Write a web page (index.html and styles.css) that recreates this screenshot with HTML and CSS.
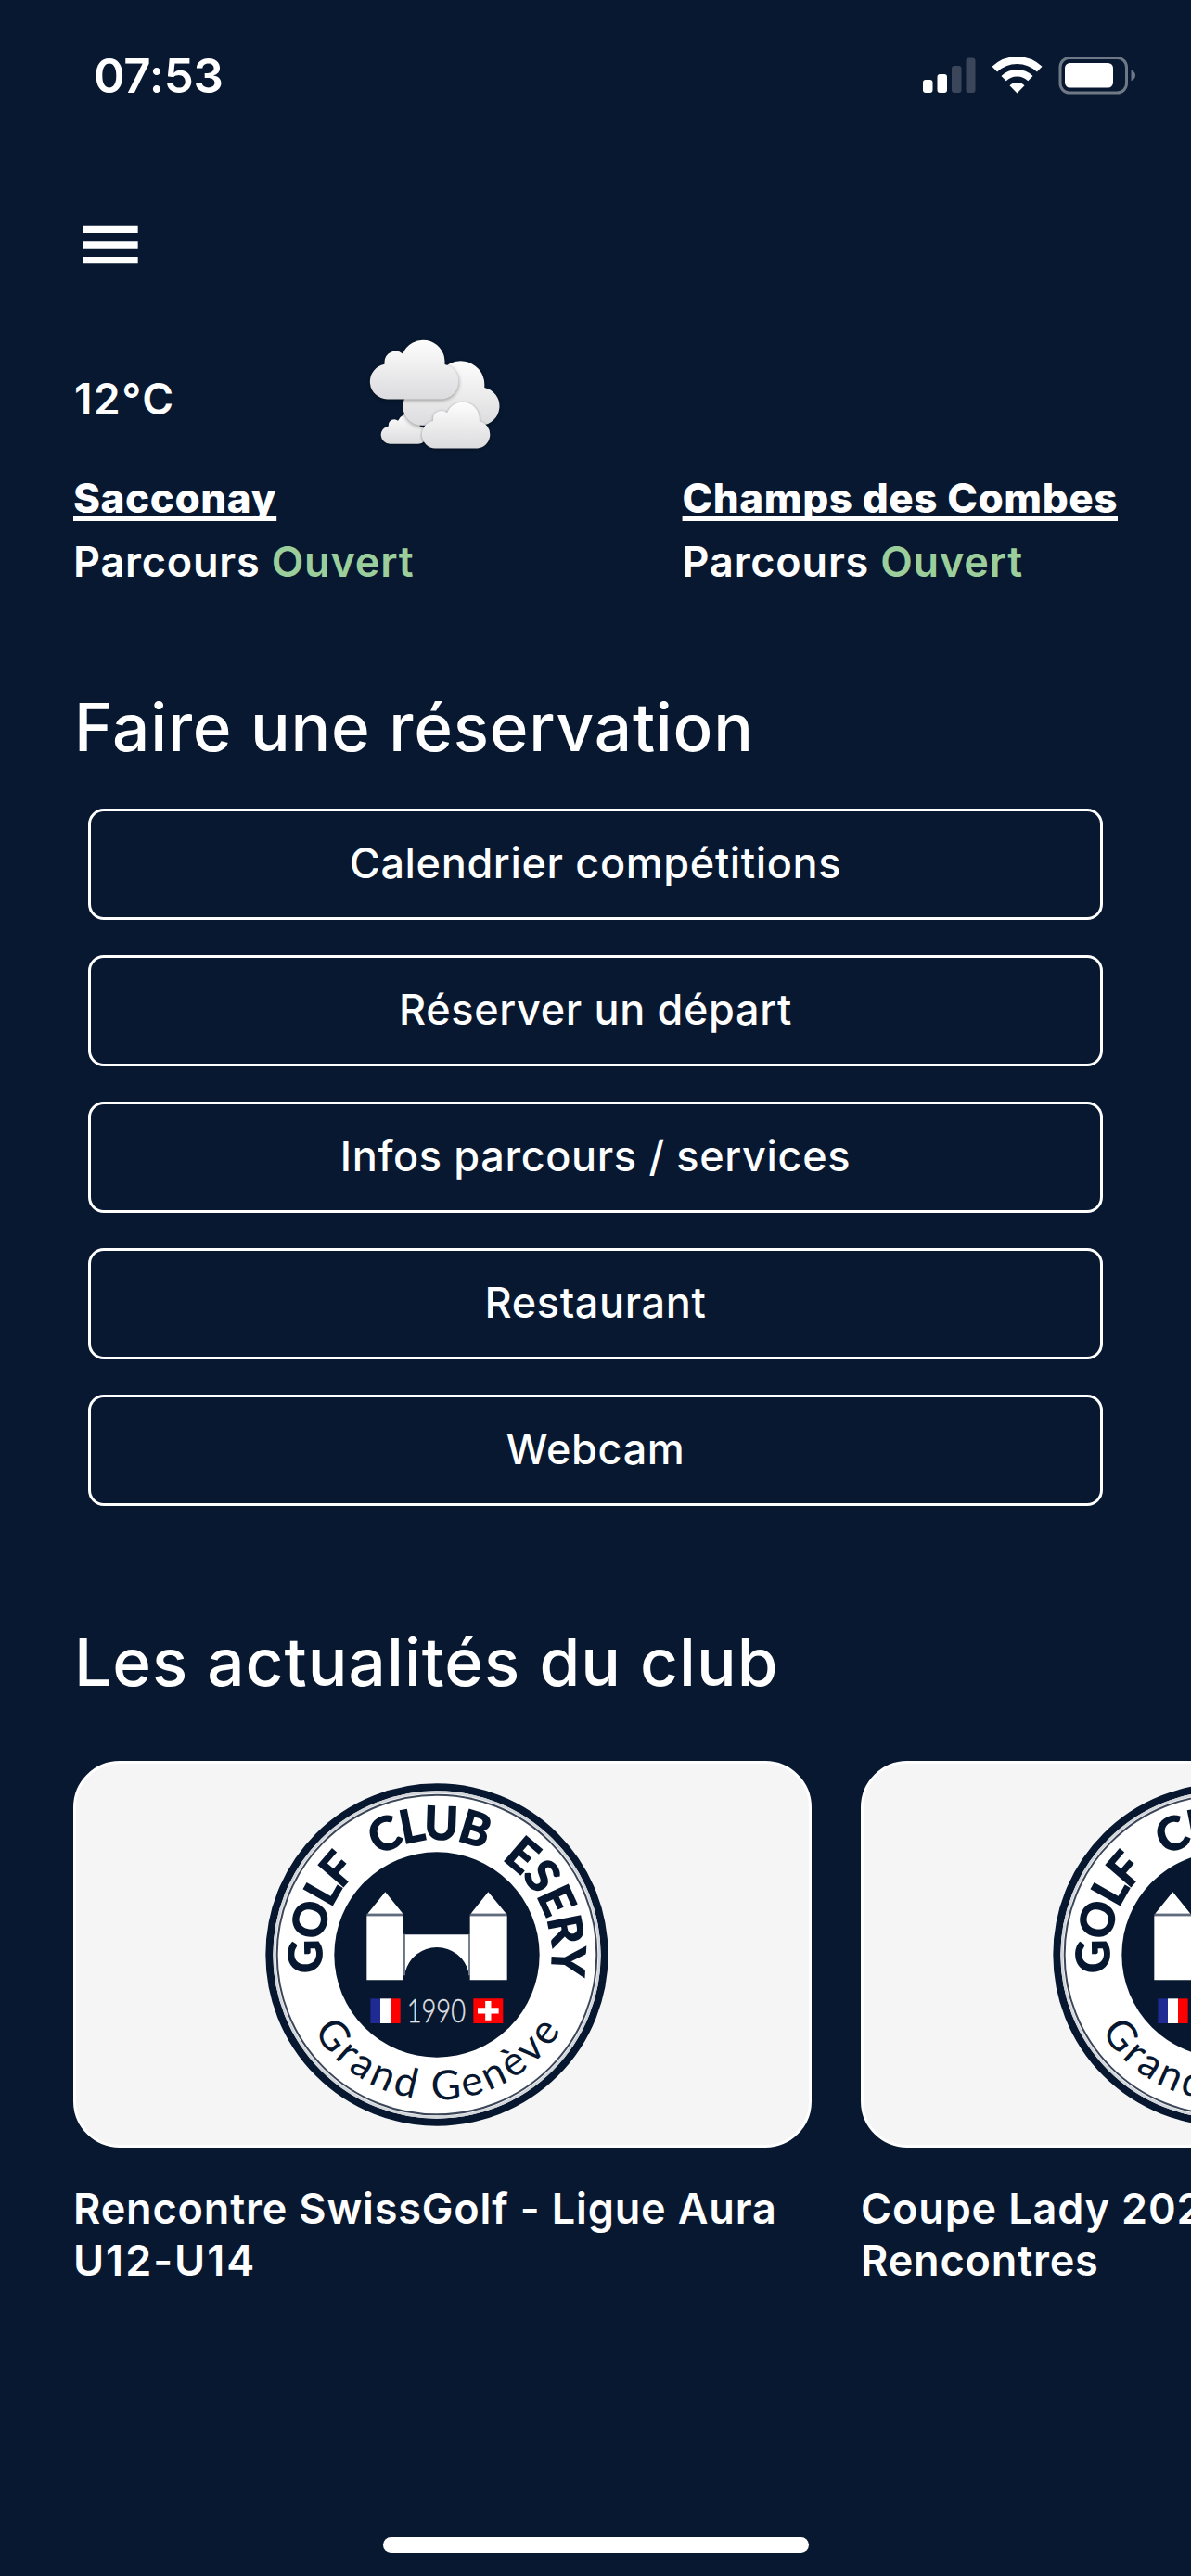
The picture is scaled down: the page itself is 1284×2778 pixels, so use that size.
FILE: index.html
```html
<!DOCTYPE html>
<html lang="fr">
<head>
    <meta charset="UTF-8">
    <meta name="viewport" content="width=device-width, initial-scale=1.0">
    <title>Golf Club Esery</title>
    <link rel="stylesheet" href="styles.css">
</head>
<body>
    <!-- Shared shapes -->
    <svg class="defs" width="0" height="0">
        <defs>
            <linearGradient id="cloud-fill" x1="0" y1="0" x2="0" y2="1">
                <stop offset="0" stop-color="#fdfdfd"/>
                <stop offset="1" stop-color="#dcdcde"/>
            </linearGradient>
            <path id="cloud" d="M19 64A19 19 0 0 1 16 26.3V24A12 12 0 0 1 35.7 15A23.5 23.5 0 0 1 81 23V26.5A19 19 0 0 1 78 64Z"/>
            <path id="arc-top" d="M280 809.5A373 373 0 1 1 926 809.5"/>
            <path id="arc-bottom" d="M133 623A470 470 0 0 0 1073 623"/>
            <symbol id="club-logo" viewBox="48 68 1110 1110">
                <circle cx="603" cy="623" r="542" fill="#fff" stroke="#06172f" stroke-width="24"/>
                <circle cx="603" cy="623" r="526" fill="none" stroke="#d3d6da" stroke-width="8"/>
                <circle cx="603" cy="623" r="517" fill="none" stroke="#3b4759" stroke-width="6"/>
                <circle cx="603" cy="623" r="332" fill="#06172f"/>
                <g class="logo-name">
                    <text textLength="365"><textPath href="#arc-top" startOffset="137">GOLF</textPath></text>
                    <text textLength="361"><textPath href="#arc-top" startOffset="579">CLUB</textPath></text>
                    <text textLength="430"><textPath href="#arc-top" startOffset="1003">ESERY</textPath></text>
                </g>
                <g class="logo-place">
                    <text textLength="402"><textPath href="#arc-bottom" startOffset="262">Grand</textPath></text>
                    <text textLength="496"><textPath href="#arc-bottom" startOffset="722">Genève</textPath></text>
                </g>
                <g fill="#fff">
                    <path d="M436 420L493 490H379ZM769 420L827 490H713Z"/>
                    <path d="M376 498H495V705H376ZM710 498H830V705H710Z"/>
                    <path d="M500 558H706V680A106 106 0 0 0 500 680Z"/>
                </g>
                <path d="M376 494H495M710 494H830M498 556V690M708 556V690" stroke="#7d8896" stroke-width="5"/>
                <path d="M388 765H420V845H388Z" fill="#1f2a92"/>
                <path d="M420 765H453V845H420Z" fill="#fff"/>
                <path d="M453 765H485V845H453Z" fill="#f00"/>
                <text class="logo-year" x="506" y="843" textLength="190" lengthAdjust="spacingAndGlyphs">1990</text>
                <path d="M721 765H817V845H721Z" fill="#f00"/>
                <path d="M735 804H803M769 773V835" stroke="#fff" stroke-width="19"/>
            </symbol>
        </defs>
    </svg>

    <div class="status-bar">
        <span class="time">07:53</span>
        <svg class="status-icons" width="232" height="44" viewBox="0 0 232 44">
            <rect x="0" y="26" width="10.5" height="14" rx="3" fill="#fff"/>
            <rect x="15.5" y="20" width="10.5" height="20" rx="3" fill="#fff"/>
            <rect x="31" y="11" width="10.5" height="29" rx="3" fill="#3c465a"/>
            <rect x="46.5" y="2.5" width="10" height="37.5" rx="3" fill="#3c465a"/>
            <g fill="none" stroke="#fff">
                <path d="M77.3 14.7A35 35 0 0 1 125.7 14.7" stroke-width="8"/>
                <path d="M87.1 24.6A20.5 20.5 0 0 1 115.9 24.6" stroke-width="7.5"/>
            </g>
            <path d="M101.5 40.5L93.5 32.2A11.5 11.5 0 0 1 109.5 32.2Z" fill="#fff"/>
            <rect x="148" y="2.5" width="71.5" height="37.5" rx="10" fill="none" stroke="#6f7886" stroke-width="3"/>
            <rect x="153" y="8" width="52" height="26.5" rx="5.5" fill="#fff"/>
            <path d="M224.5 15.5Q229 17.5 229 21.3T224.5 27.2Z" fill="#6f7886"/>
        </svg>
    </div>

    <header class="header">
        <svg class="menu-icon" viewBox="0 0 24 24">
            <path d="M3 5.9H20.9V8.1H3ZM3 10.9H20.9V13.1H3ZM3 15.9H20.9V18.1H3Z" fill="#fff"/>
        </svg>
    </header>

    <section class="weather">
        <span class="temperature">12°C</span>
        <svg class="clouds" width="160" height="132" viewBox="390 364 160 132" fill="url(#cloud-fill)">
            <use href="#cloud" transform="translate(410.5 446) scale(.52 .51)"/>
            <use href="#cloud" transform="translate(434 389) scale(1.09)"/>
            <use href="#cloud" transform="translate(398.5 366.5)"/>
            <use href="#cloud" transform="translate(454.5 433.5) scale(.77 .78)"/>
        </svg>
    </section>

    <section class="courses">
        <div class="course">
            <a class="course-name">Sacconay</a>
            <p class="course-status">Parcours <span class="open">Ouvert</span></p>
        </div>
        <div class="course">
            <a class="course-name">Champs des Combes</a>
            <p class="course-status">Parcours <span class="open">Ouvert</span></p>
        </div>
    </section>

    <section class="booking">
        <h2>Faire une réservation</h2>
        <div class="buttons">
            <button>Calendrier compétitions</button>
            <button>Réserver un départ</button>
            <button>Infos parcours / services</button>
            <button>Restaurant</button>
            <button>Webcam</button>
        </div>
    </section>

    <section class="news">
        <h2>Les actualités du club</h2>
        <div class="news-list">
            <article class="news-item">
                <div class="news-image"><svg class="logo"><use href="#club-logo"/></svg></div>
                <h3>Rencontre SwissGolf - Ligue Aura <span class="category">U12-U14</span></h3>
            </article>
            <article class="news-item">
                <div class="news-image"><svg class="logo"><use href="#club-logo"/></svg></div>
                <h3>Coupe Lady 202<br>Rencontres</h3>
            </article>
        </div>
    </section>

    <div class="home-indicator"></div>
</body>
</html>
```

FILE: styles.css
```css
* {
    box-sizing: border-box;
}

body {
    display: flex;
    flex-direction: column;
    height: 2778px;
    margin: 0;
    overflow: hidden;
    background-color: #071830;
    color: #fff;
    font-family: Inter, "Liberation Sans", sans-serif;
    font-weight: 500;
}

h2, h3, p {
    margin: 0;
}

.defs {
    position: absolute;
}

/* Status bar */
.status-bar {
    display: flex;
    align-items: center;
    justify-content: space-between;
    height: 163px;
    padding: 0 57px 0 101px;
}

.time {
    font-size: 51px;
    font-weight: 600;
    letter-spacing: -0.3px;
}

.header {
    display: flex;
    align-items: center;
    height: 201px;
    padding-left: 79px;
}

.menu-icon {
    width: 80px;
    height: 80px;
}

/* Weather and course status */
.weather {
    display: flex;
    align-items: center;
    height: 132px;
    padding-left: 80px;
}

.temperature {
    width: 310px;
    font-size: 46px;
    font-weight: 600;
    letter-spacing: 1.6px;
}

.clouds use {
    filter: drop-shadow(0 1px 2px rgba(0, 0, 0, 0.4));
}

.courses {
    display: flex;
    justify-content: space-between;
    margin-top: 7px;
    padding: 0 79px;
    line-height: 68px;
}

.course-name {
    display: block;
    width: fit-content;
    font-size: 44px;
    font-weight: 800;
    letter-spacing: 0.55px;
    text-decoration: underline;
    text-decoration-thickness: 5px;
    text-decoration-skip-ink: none;
    text-underline-offset: 4px;
}

.course-status {
    margin-top: 1px;
    font-size: 45px;
    font-weight: 600;
    letter-spacing: 0.8px;
}

.open {
    color: #9bce9b;
}

h2 {
    padding-left: 80px;
    font-size: 71px;
    font-weight: 540;
    letter-spacing: 0.8px;
    line-height: 90px;
}

/* Booking buttons */
.booking {
    margin-top: 99px;
}

.buttons {
    display: flex;
    flex-direction: column;
    gap: 38px;
    margin-top: 43px;
    padding: 0 95px;
}

button {
    height: 120px;
    padding: 0 0 3px;
    border: 3px solid #fff;
    border-radius: 17px;
    background: none;
    color: #fff;
    font-family: inherit;
    font-size: 45px;
    font-weight: 540;
    letter-spacing: 0.65px;
}

/* News */
.news {
    margin-top: 123px;
}

.news h2 {
    letter-spacing: 1.05px;
}

.news-list {
    display: flex;
    gap: 53px;
    margin-top: 62px;
    padding-left: 79px;
}

.news-item {
    flex: 0 0 796px;
}

.news-image {
    height: 417px;
    padding: 21px 0 0 204px;
    border: 3px solid #fff;
    border-radius: 50px;
    background-color: #f5f5f5;
}

.logo {
    display: block;
    width: 370px;
    height: 370px;
}

.logo-name {
    fill: #06172f;
    stroke: #06172f;
    stroke-width: 5px;
    font-family: Lato, sans-serif;
    font-size: 147px;
    font-weight: 700;
}

.logo-place {
    fill: #06172f;
    font-family: Lato, sans-serif;
    font-size: 132px;
    font-weight: 400;
}

.logo-year {
    fill: #e4e6e9;
    stroke: #e4e6e9;
    stroke-width: 1px;
    font-family: Lato, sans-serif;
    font-size: 104px;
    font-weight: 300;
}

h3 {
    margin-top: 38px;
    font-size: 45px;
    font-weight: 600;
    letter-spacing: 0.85px;
    line-height: 56px;
}

.category {
    letter-spacing: 2px;
}

.home-indicator {
    width: 459px;
    height: 17px;
    margin: auto auto 25px;
    border-radius: 9px;
    background-color: #fff;
}
```
